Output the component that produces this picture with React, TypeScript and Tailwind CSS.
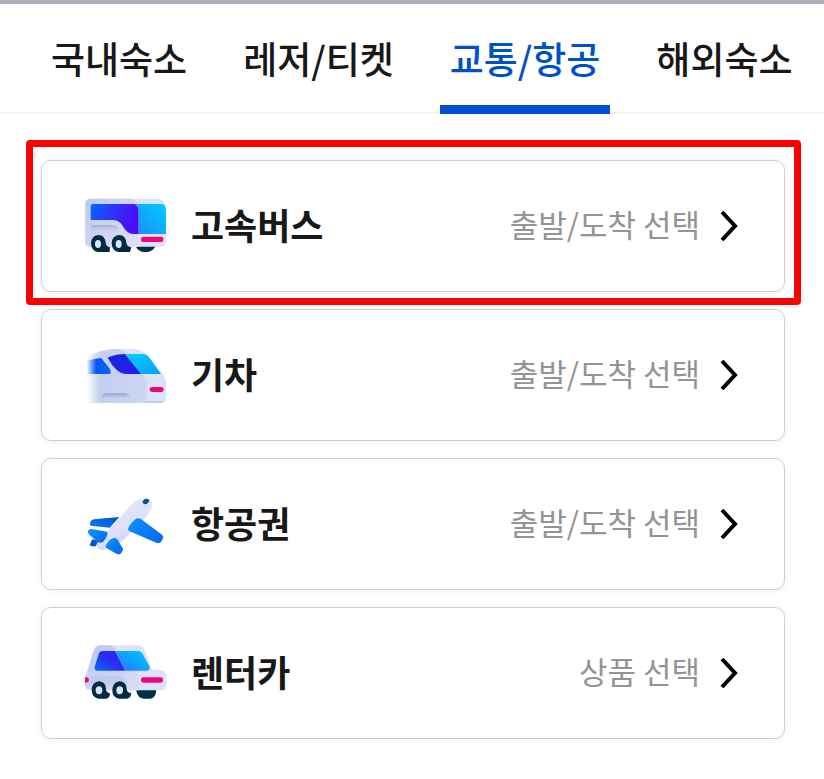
import { useState } from 'react';
import type { ReactNode } from 'react';

const tabs = ['국내숙소', '레저/티켓', '교통/항공', '해외숙소'];

type TransportItem = {
  name: string;
  hint: string;
  icon: ReactNode;
  highlighted?: boolean;
};

function BusIcon() {
  return (
    <svg viewBox="0 3 330 240" className="w-[110px] h-20 shrink-0" aria-hidden="true">
      <defs>
        <linearGradient id="bus-body" x1="0" y1="0" x2="1" y2="1">
          <stop offset="0" stopColor="#bcc9ed" />
          <stop offset="1" stopColor="#dfe0f8" />
        </linearGradient>
        <linearGradient id="bus-side" x1="0" y1="0" x2="1" y2="0.3">
          <stop offset="0" stopColor="#0567fa" />
          <stop offset="0.6" stopColor="#342cf8" />
          <stop offset="1" stopColor="#4b0cf5" />
        </linearGradient>
        <linearGradient id="bus-front" x1="0" y1="1" x2="1" y2="0">
          <stop offset="0" stopColor="#1c8dff" />
          <stop offset="1" stopColor="#00ccff" />
        </linearGradient>
        <linearGradient id="bus-shade" x1="0" y1="0" x2="0" y2="1">
          <stop offset="0" stopColor="#9facd9" />
          <stop offset="1" stopColor="#c5cff0" stopOpacity="0" />
        </linearGradient>
      </defs>
      <path d="M196 180H258Q250 202 226 202Q202 202 196 180Z" fill="#003047" />
      <path d="M62 41H262Q288 43 288 70V168Q288 185 272 185H58Q46 185 46 171V57Q46 41 62 41Z" fill="#dce3f8" />
      <path d="M62 41H181Q206 44 206 72V185H58Q46 185 46 171V57Q46 41 62 41Z" fill="url(#bus-body)" />
      <path d="M69 57H195Q206 64 206 78V147H188Q171 145 160 126Q149 105 130 105H62V65Q62 57 69 57Z" fill="url(#bus-side)" />
      <path d="M195 57H276Q288 60 288 76V147H206V78Q206 63 195 57Z" fill="url(#bus-front)" />
      <path d="M62 131Q62 120 73 120H126Q139 120 145 131V143H62Z" fill="url(#bus-shade)" />
      <path d="M85 150Q105 150 107 174Q108 184 120 187L119 201H84Q64 199 63 175Q64 152 85 150Z" fill="#002b42" />
      <path d="M147 150Q167 150 169 174Q170 184 184 187L180 201H146Q126 199 125 175Q126 152 147 150Z" fill="#002b42" />
      <ellipse cx="84" cy="177" rx="9" ry="12" fill="#dce6fa" />
      <ellipse cx="146" cy="177" rx="9" ry="12" fill="#dce6fa" />
      <rect x="213" y="155" width="67" height="16" rx="6" fill="#ed087e" />
    </svg>
  );
}

function TrainIcon() {
  return (
    <svg viewBox="0 0 330 240" className="w-[110px] h-20 shrink-0" aria-hidden="true">
      <defs>
        <linearGradient id="train-body" x1="0" y1="0" x2="1" y2="0">
          <stop offset="0" stopColor="#c4cff0" stopOpacity="0" />
          <stop offset="0.22" stopColor="#c4cff0" />
          <stop offset="1" stopColor="#cdd6f3" />
        </linearGradient>
        <linearGradient id="train-side" x1="0" y1="0" x2="1" y2="0">
          <stop offset="0" stopColor="#0963ef" stopOpacity="0" />
          <stop offset="0.4" stopColor="#0757f1" />
          <stop offset="1" stopColor="#0868f8" />
        </linearGradient>
        <linearGradient id="train-glass" x1="0" y1="0" x2="1" y2="1">
          <stop offset="0" stopColor="#1528d5" />
          <stop offset="1" stopColor="#2c19f0" />
        </linearGradient>
        <linearGradient id="train-front" x1="0" y1="0" x2="1" y2="1">
          <stop offset="0" stopColor="#00cffd" />
          <stop offset="1" stopColor="#0c9fff" />
        </linearGradient>
        <linearGradient id="train-shade" x1="0" y1="0" x2="0" y2="1">
          <stop offset="0" stopColor="#99a8d6" />
          <stop offset="1" stopColor="#bdc9ec" />
        </linearGradient>
      </defs>
      <path d="M137 42H188Q213 42 229 57L274 112Q288 126 288 147V184Q288 204 270 204H205Z" fill="#dce2f7" />
      <path d="M50 64Q96 43 137 42Q158 43 169 56L220 119Q231 133 231 153V204H50Z" fill="url(#train-body)" />
      <path d="M50 78Q74 71 91 69Q95 69 98 74L120 102Q126 117 116 117H50Z" fill="url(#train-side)" />
      <path d="M113 68Q134 58 165 57L214 117H167Q138 115 113 68Z" fill="url(#train-glass)" />
      <path d="M165 57H222Q233 60 239 69L273 117H214Z" fill="url(#train-front)" />
      <path d="M95 188Q95 174 108 174H165Q177 175 177 188Z" fill="url(#train-shade)" />
      <path d="M231 198H285Q280 204 270 204H220Z" fill="#c1ccee" />
      <rect x="239" y="156" width="42" height="15" rx="7" fill="#ed087e" />
    </svg>
  );
}

function PlaneIcon() {
  return (
    <svg viewBox="0 -3 330 240" className="w-[110px] h-20 shrink-0" aria-hidden="true">
      <defs>
        <linearGradient id="plane-body" x1="0.3" y1="0.2" x2="0.7" y2="0.9">
          <stop offset="0" stopColor="#e3e8fa" />
          <stop offset="0.6" stopColor="#dcdffa" />
          <stop offset="1" stopColor="#bfcaf0" />
        </linearGradient>
        <linearGradient id="plane-wing" x1="0" y1="0" x2="1" y2="1">
          <stop offset="0" stopColor="#0b93ff" />
          <stop offset="1" stopColor="#0865ee" />
        </linearGradient>
        <linearGradient id="plane-back" x1="0" y1="1" x2="1" y2="0">
          <stop offset="0" stopColor="#087bf5" />
          <stop offset="1" stopColor="#0750c9" />
        </linearGradient>
      </defs>
      <path d="M60 116Q61 105 72 103L148 96L119 128L63 122Q59 121 60 116Z" fill="url(#plane-back)" />
      <path d="M67 162L86 169L77 184H64Q59 183 60 178Z" fill="#0759c2" />
      <path d="M82 173L185 58Q202 41 229 39Q248 42 247 59Q244 79 225 98L164 162Q131 188 96 195Q82 194 80 183Z" fill="url(#plane-body)" />
      <path d="M54 140Q55 132 63 132L104 139Q115 140 112 149Q110 159 99 171Q91 176 83 170L58 149Q54 145 54 140Z" fill="url(#plane-wing)" />
      <path d="M108 180Q118 162 132 159Q139 158 143 164L158 190Q160 195 157 199L151 207Q146 209 140 207L109 189Q106 186 108 180Z" fill="url(#plane-wing)" />
      <path d="M174 132Q180 116 196 103Q204 96 214 103L276 149Q282 154 279 160L273 171Q268 175 259 173L184 141Q175 139 174 132Z" fill="url(#plane-wing)" />
      <path d="M218 49Q222 40 231 41L238 44Q235 57 226 58Q217 57 218 49Z" fill="#064f9d" />
    </svg>
  );
}

function CarIcon() {
  return (
    <svg viewBox="0 9 330 240" className="w-[110px] h-20 shrink-0" aria-hidden="true">
      <defs>
        <linearGradient id="car-body" x1="0" y1="0" x2="1" y2="1">
          <stop offset="0" stopColor="#bac7ec" />
          <stop offset="1" stopColor="#dcddf7" />
        </linearGradient>
        <linearGradient id="car-side" x1="0" y1="1" x2="1" y2="0">
          <stop offset="0" stopColor="#086cff" />
          <stop offset="0.5" stopColor="#292ff3" />
          <stop offset="1" stopColor="#3618f5" />
        </linearGradient>
        <linearGradient id="car-front" x1="0" y1="1" x2="1" y2="0">
          <stop offset="0" stopColor="#2474ff" />
          <stop offset="1" stopColor="#00ccff" />
        </linearGradient>
      </defs>
      <path d="M199 178H258V187Q255 206 239 206H221Q204 205 199 184Z" fill="#003047" />
      <path d="M88 46H202Q216 46 223 58L246 120H272Q289 122 289 141V165Q288 181 270 181H100V46Z" fill="#dce2f7" />
      <path d="M88 46H119Q132 49 140 64L166 121H187Q205 126 206 145V181H66Q45 180 45 165V145L71 61Q76 47 88 46Z" fill="url(#car-body)" />
      <path d="M97 63H135L166 122H82Q71 120 74 110L87 70Q90 63 97 63Z" fill="url(#car-side)" />
      <path d="M135 63H203Q214 63 218 72L238 108Q242 122 230 122H166Z" fill="url(#car-front)" />
      <path d="M60 153Q62 137 78 137H145Q160 138 169 151L174 166H60Z" fill="#b9c4e9" opacity="0.6" />
      <path d="M45 142H49Q57 143 57 150Q57 157 49 158H45Z" fill="#ed087e" />
      <path d="M88 154Q107 156 108 177Q108 187 120 190Q120 204 109 206H86Q66 203 65 181Q66 156 88 154Z" fill="#002b42" />
      <path d="M150 154Q169 156 170 177Q170 187 184 190Q183 204 171 206H147Q127 203 127 181Q128 156 150 154Z" fill="#002b42" />
      <ellipse cx="87" cy="181" rx="10" ry="12" fill="#dce6fa" />
      <ellipse cx="149" cy="181" rx="10" ry="12" fill="#dce6fa" />
      <rect x="213" y="142" width="66" height="16" rx="7" fill="#ed087e" />
    </svg>
  );
}

const items: TransportItem[] = [
  { name: '고속버스', hint: '출발/도착 선택', icon: <BusIcon />, highlighted: true },
  { name: '기차', hint: '출발/도착 선택', icon: <TrainIcon /> },
  { name: '항공권', hint: '출발/도착 선택', icon: <PlaneIcon /> },
  { name: '렌터카', hint: '상품 선택', icon: <CarIcon /> },
];

export default function App() {
  const [activeTab, setActiveTab] = useState('교통/항공');

  return (
    <div className="min-h-screen bg-white border-t-4 border-[#abafb8] font-['Noto_Sans_CJK_KR',sans-serif]">
      <nav className="flex gap-9 pl-[41px] border-b-2 border-[#f2f2f2]">
        {tabs.map((tab) => (
          <button
            key={tab}
            type="button"
            onClick={() => setActiveTab(tab)}
            className={`-mb-0.5 px-2.5 pt-[30px] pb-[22px] border-b-[9px] text-[37px] leading-[49px] font-medium whitespace-nowrap ${
              activeTab === tab ? 'border-[#0050d0] text-[#0050c8]' : 'border-transparent text-[#181818]'
            }`}
          >
            {tab}
          </button>
        ))}
      </nav>

      <ul className="flex flex-col gap-[17px] pl-[41px] pr-[39px] pt-[46px] pb-10">
        {items.map((item) => (
          <li key={item.name} className="relative">
            <button
              type="button"
              className="flex items-center w-full py-[25px] pl-7 pr-[46px] bg-white border border-[#cfcfcf] rounded-[10px] shadow-[0_1px_8px_rgba(0,0,0,0.06)]"
            >
              {item.icon}
              <span className="ml-[11px] pb-1 text-4xl font-bold text-[#181818]">{item.name}</span>
              <span className="ml-auto pb-1 text-[31px] text-[#949494]">{item.hint}</span>
              <svg
                viewBox="0 0 18 32"
                className="w-[18px] h-8 ml-5 shrink-0"
                fill="none"
                stroke="#000"
                strokeWidth="4"
                aria-hidden="true"
              >
                <path d="M2 2L15 16L2 30" />
              </svg>
            </button>
            {item.highlighted && (
              <div className="absolute -top-5 -bottom-[13px] -left-[15px] -right-4 border-[7px] border-[#ff0000] rounded-sm pointer-events-none" />
            )}
          </li>
        ))}
      </ul>
    </div>
  );
}
